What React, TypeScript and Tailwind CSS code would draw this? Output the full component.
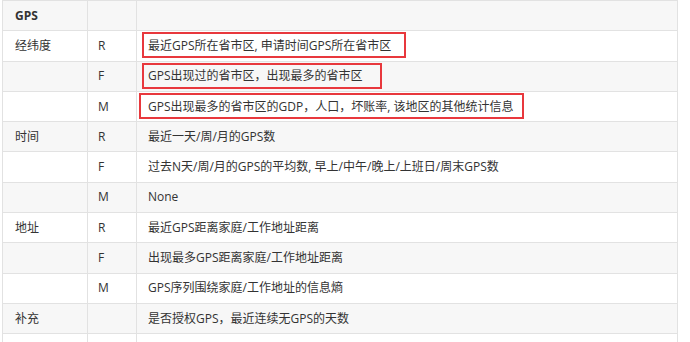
import React from "react";

type Row = { a: string; b: string; c: string; box?: number };

const rows: Row[] = [
  { a: "经纬度", b: "R", c: "最近GPS所在省市区, 申请时间GPS所在省市区", box: 264 },
  { a: "", b: "F", c: "GPS出现过的省市区，出现最多的省市区", box: 240 },
  { a: "", b: "M", c: "GPS出现最多的省市区的GDP，人口，坏账率, 该地区的其他统计信息", box: 385 },
  { a: "时间", b: "R", c: "最近一天/周/月的GPS数" },
  { a: "", b: "F", c: "过去N天/周/月的GPS的平均数, 早上/中午/晚上/上班日/周末GPS数" },
  { a: "", b: "M", c: "None" },
  { a: "地址", b: "R", c: "最近GPS距离家庭/工作地址距离" },
  { a: "", b: "F", c: "出现最多GPS距离家庭/工作地址距离" },
  { a: "", b: "M", c: "GPS序列围绕家庭/工作地址的信息熵" },
  { a: "补充", b: "", c: "是否授权GPS，最近连续无GPS的天数" },
  { a: "", b: "", c: "" },
];

export default function App() {
  return (
    <div
      className="w-[690px] h-[342px] overflow-hidden bg-white text-[12px] text-[#333]"
      style={{ fontFamily: '"Open Sans", "Noto Sans CJK SC", sans-serif' }}
    >
      <div className="ml-[2px] w-[676px] border-x border-t border-[#e2e2e2]">
        <div className="flex h-[30.3px] border-b border-[#e2e2e2] bg-[#f7f7f7]">
          <div className="w-[85px] border-r border-[#e2e2e2] pl-3 flex items-center font-bold">GPS</div>
          <div className="w-[49px] border-r border-[#e2e2e2]"></div>
          <div className="flex-1"></div>
        </div>
        {rows.map((r, i) => (
          <div
            key={i}
            className={`flex h-[30.3px] border-b border-[#e2e2e2] ${i % 2 === 1 ? "bg-[#f7f7f7]" : "bg-white"}`}
          >
            <div className="w-[85px] border-r border-[#e2e2e2] pl-3 flex items-center">{r.a}</div>
            <div className="w-[49px] border-r border-[#e2e2e2] pl-[10px] flex items-center">{r.b}</div>
            <div className="relative flex-1 pl-[11px] flex items-center">
              {r.c}
              {r.box && (
                <span
                  className={`absolute top-[1px] h-[26px] border-2 border-[#e8383d] ${i === 2 ? "left-[2px]" : "left-[5px]"}`}
                  style={{ width: r.box }}
                ></span>
              )}
            </div>
          </div>
        ))}
      </div>
    </div>
  );
}
